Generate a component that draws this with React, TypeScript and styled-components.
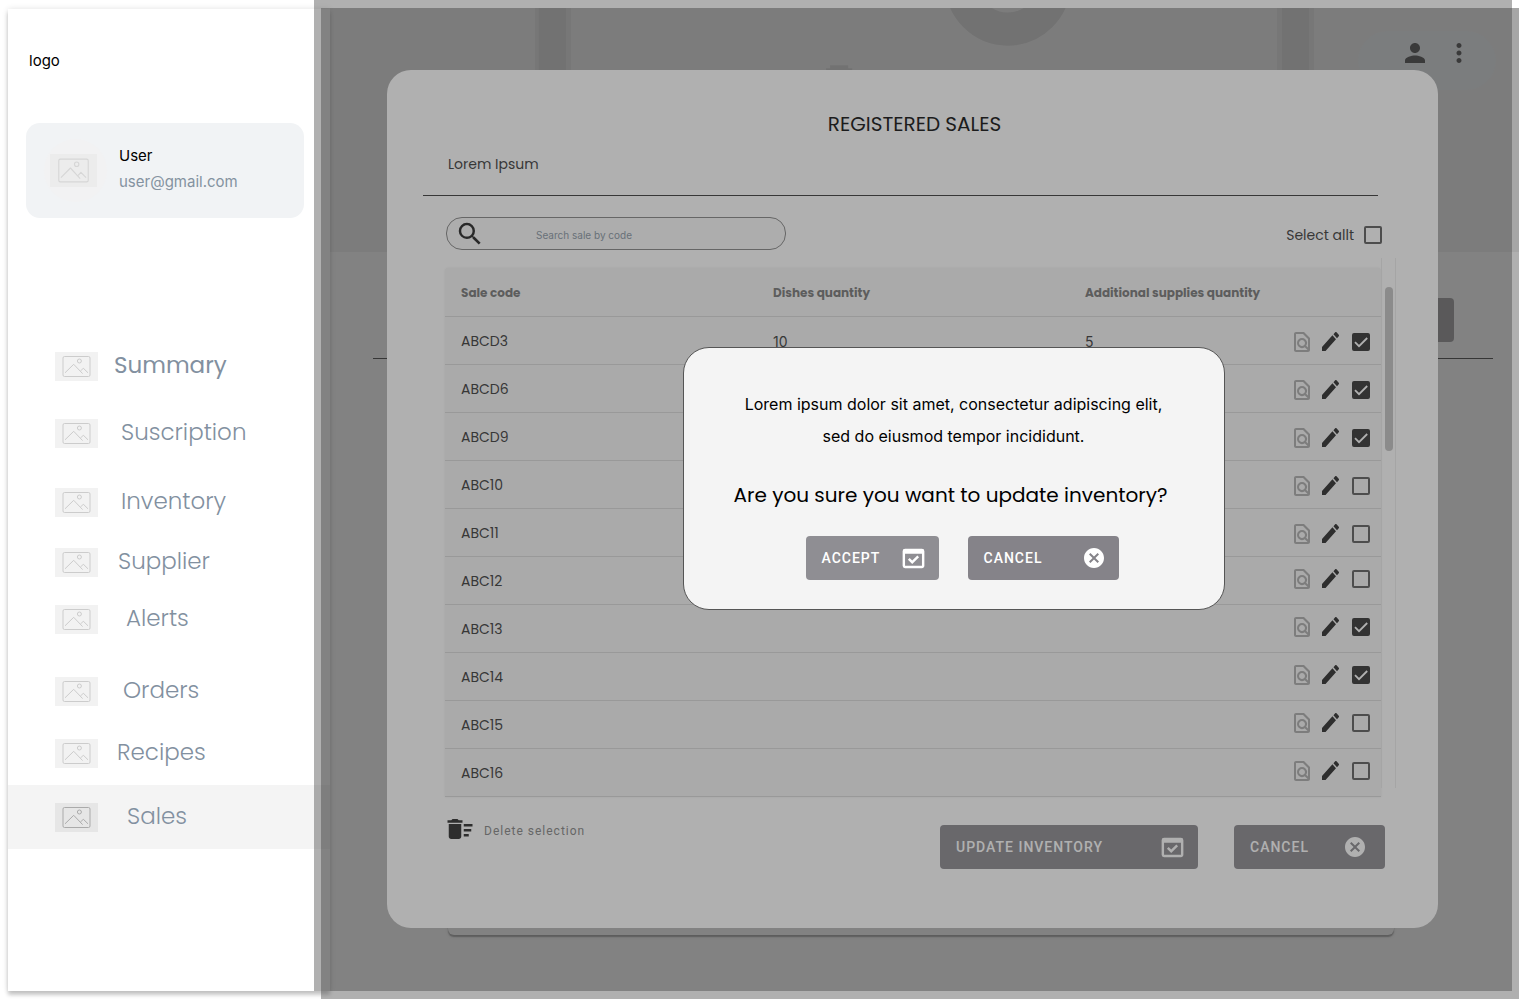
import React, { useState } from "react";
import styled, { createGlobalStyle } from "styled-components";
import {
  MdCancel,
  MdDeleteSweep,
  MdMoreVert,
  MdOutlineDomainVerification,
  MdOutlineFindInPage,
  MdPerson,
  MdSearch,
} from "react-icons/md";

const display = `Poppins, Inter, "Open Sans", sans-serif`;
const body = `Inter, "Open Sans", sans-serif`;
const label = `Roboto, Inter, sans-serif`;

const GlobalStyle = createGlobalStyle`
  *, *::before, *::after { box-sizing: border-box; }
  body { margin: 0; background: #fff; font-family: ${body}; color: #000; }
  button, input { font: inherit; }
`;

/* Every layer of the page shares one grid cell, so they stack in source order. */
const Page = styled.div`
  display: grid;
  grid-template-columns: minmax(0, 1fr);
  min-height: 100vh;
  & > * {
    grid-area: 1 / 1;
  }
`;

const Shell = styled.div`
  display: flex;
`;

const Sidebar = styled.aside`
  display: flex;
  flex-direction: column;
  flex: none;
  width: 322px;
  margin: 9px 0 12px 8px;
  background: #fff;
  box-shadow: 0 4px 4px rgba(0, 0, 0, 0.2), 0 0 6px rgba(0, 0, 0, 0.12);
  z-index: 1;
`;

const Logo = styled.div`
  padding: 42px 21px 0;
  font-size: 15px;
  line-height: 20px;
`;

const UserCard = styled.section`
  display: flex;
  align-items: center;
  gap: 12px;
  height: 95px;
  margin: 52px 26px 0 18px;
  padding: 0 18px;
  border-radius: 14px;
  background: #f1f3f5;
`;

const Avatar = styled.div`
  display: grid;
  place-items: center;
  width: 63px;
  height: 63px;
  padding-right: 4px;
  border-radius: 50%;
  background: #f2f2f3;
`;

const UserText = styled.div`
  font-size: 15px;
  line-height: 26px;
  padding-bottom: 3px;
`;

const Email = styled.div`
  color: #8492a0;
`;

const Nav = styled.nav`
  display: flex;
  flex-direction: column;
  padding-top: 126px;
`;

const NavLink = styled.a<{ $before?: number; $gap: number; $active?: boolean; $strong?: boolean }>`
  display: flex;
  align-items: center;
  gap: ${(p) => p.$gap}px;
  height: ${(p) => (p.$active ? 64 : 44)}px;
  margin-top: ${(p) => p.$before ?? 0}px;
  padding-left: 47px;
  background: ${(p) => (p.$active ? "#f4f4f4" : "transparent")};
  color: #8290a0;
  font-family: ${display};
  font-size: 23px;
  font-weight: ${(p) => (p.$strong ? 400 : 300)};
  line-height: 32px;
  text-decoration: none;
`;

const NavText = styled.span`
  padding-bottom: 2px;
`;

const Main = styled.main`
  flex: 1;
  min-width: 0;
  margin: 8px 1px 12px 0;
`;

const Banner = styled.div`
  display: flex;
  justify-content: flex-end;
  align-items: flex-start;
  height: 244px;
  background: #eeeeee;
`;

const BannerArt = styled.svg`
  flex: 1;
  min-width: 0;
  height: 244px;
  margin-right: -161px;
`;

const Account = styled.div`
  display: flex;
  align-items: center;
  justify-content: flex-end;
  gap: 14px;
  width: 138px;
  height: 59px;
  margin: 23px 23px 0 0;
  padding: 0 22px 16px;
  border-radius: 30px;
  background: #ebeff3;
  color: #2a2a2a;
`;

const IconButton = styled.button`
  display: grid;
  place-items: center;
  padding: 0;
  border: 0;
  background: none;
  color: inherit;
`;

const PageActions = styled.div`
  display: flex;
  justify-content: flex-end;
  margin: 46px 65px 16px 43px;
`;

const BackAction = styled.div`
  width: 151px;
  height: 44px;
  border-radius: 4px;
  background: #88868b;
`;

const PageRule = styled.hr`
  margin: 0 26px 0 43px;
  border: 0;
  border-top: 1px solid #202020;
`;

const BackTable = styled.div`
  height: 576px;
  margin: 0 125px 0 118px;
  border-radius: 0 0 6px 6px;
  box-shadow: 0 2px 1px rgba(0, 0, 0, 0.3), 0 2px 3px rgba(0, 0, 0, 0.2);
`;

const Dim = styled.div<{ $front?: boolean }>`
  margin: ${(p) => (p.$front ? "0 8px 12px 314px" : "8px 1px 4px 321px")};
  background: rgba(66, 66, 66, 0.42);
  z-index: 1;
`;

const Panel = styled.section`
  align-self: start;
  display: flex;
  flex-direction: column;
  margin: 70px 82px 75px 387px;
  padding: 40px 42px 59px 58px;
  border-radius: 24px;
  background: #fff;
  z-index: 1;
`;

const Title = styled.h1`
  margin: 0;
  padding-right: 12px;
  font-family: ${display};
  font-size: 20px;
  font-weight: 400;
  line-height: 28px;
  text-align: center;
`;

const Subtitle = styled.p`
  margin: 16px 3px 0;
  color: #303030;
  font-family: ${display};
  font-size: 14px;
  line-height: 20px;
`;

const Rule = styled.hr`
  margin: 21px 18px 0 -22px;
  border: 0;
  border-top: 1px solid #303030;
`;

const Toolbar = styled.div`
  display: flex;
  align-items: center;
  justify-content: space-between;
  margin: 21px 14px 8px 1px;
`;

const SearchBox = styled.label`
  display: flex;
  align-items: center;
  gap: 51px;
  width: 340px;
  height: 33px;
  padding: 0 8px;
  border: 1px solid #808080;
  border-radius: 16px;
  background: #fafafa;
  color: #181818;
`;

const SearchInput = styled.input`
  flex: 1;
  min-width: 0;
  padding: 2px 0 0;
  border: 0;
  outline: 0;
  background: none;
  font-family: ${body};
  font-size: 10px;
  &::placeholder {
    color: #8492a0;
    opacity: 1;
  }
`;

const SelectAll = styled.label`
  display: flex;
  align-items: center;
  gap: 10px;
  padding-top: 3px;
  color: #303030;
  font-family: ${display};
  font-size: 14px;
  line-height: 20px;
`;

const Scroller = styled.div`
  display: flex;
`;

const TableFrame = styled.div`
  flex: 1;
  min-width: 0;
  padding-top: 10px;
`;

const Table = styled.table`
  width: 100%;
  table-layout: fixed;
  border-collapse: separate;
  border-spacing: 0;
  background: #f5f5f5;
  border-radius: 4px 4px 0 0;
  box-shadow: 0 0 2px rgba(0, 0, 0, 0.1);
`;

const HeadCell = styled.th<{ $width?: string }>`
  width: ${(p) => p.$width ?? "auto"};
  height: 49px;
  padding: 2px 0 0 16px;
  border-bottom: 1px solid #d8d8d8;
  color: #707070;
  font-family: ${display};
  font-size: 12px;
  font-weight: 700;
  text-align: left;
  white-space: nowrap;
`;

const Cell = styled.td<{ $numeric?: boolean }>`
  height: 48px;
  padding: 2px 0 0 16px;
  border-bottom: 1px solid #d8d8d8;
  color: #303030;
  font-family: ${(p) => (p.$numeric ? body : display)};
  font-size: 14px;
`;

const ActionCell = styled.td`
  padding: 0;
  border-bottom: 1px solid #d8d8d8;
`;

const RowActions = styled.div<{ $raised: boolean }>`
  display: flex;
  align-items: center;
  justify-content: flex-end;
  gap: 8px;
  padding: ${(p) => (p.$raised ? "0 11px 4px 0" : "2px 11px 0 0")};
`;

const FindButton = styled(IconButton)`
  color: #a8a8a8;
`;

const EditButton = styled(IconButton)`
  margin-right: 5px;
  color: #202020;
`;

const CheckFrame = styled.span`
  position: relative;
  display: inline-flex;
`;

const CheckInput = styled.input`
  appearance: none;
  width: 18px;
  height: 18px;
  margin: 0;
  border: 2px solid #555;
  border-radius: 2px;
  &:checked {
    border-color: #282828;
    background: #282828;
  }
`;

const CheckMark = styled.svg`
  position: absolute;
  inset: 0;
  pointer-events: none;
`;

const ScrollTrack = styled.div`
  width: 15px;
  height: 530px;
  padding: 29px 3px 0;
  border: solid #ececec;
  border-width: 0 1px;
`;

const ScrollThumb = styled.div`
  width: 8px;
  height: 164px;
  border-radius: 4px;
  background: #c0c0c0;
`;

const Footer = styled.footer`
  display: flex;
  align-items: flex-start;
  justify-content: space-between;
  padding: 28px 11px 0 0;
`;

const DeleteButton = styled.button`
  display: flex;
  align-items: center;
  gap: 9px;
  height: 30px;
  margin-top: -11px;
  padding: 0;
  border: 0;
  background: none;
  color: #808080;
  font-family: ${label};
  font-size: 12px;
  font-weight: 400;
  letter-spacing: 1px;
  svg {
    color: #202020;
  }
`;

const DeleteText = styled.span`
  padding-top: 4px;
`;

const ButtonRow = styled.div<{ $gap: number }>`
  display: flex;
  gap: ${(p) => p.$gap}px;
`;

const ActionButton = styled.button<{ $width: number; $end: number; $tone?: string }>`
  display: flex;
  align-items: center;
  justify-content: space-between;
  width: ${(p) => p.$width}px;
  height: 44px;
  padding: 0 ${(p) => p.$end}px 0 16px;
  border: 0;
  border-radius: 4px;
  background: ${(p) => p.$tone ?? "#858389"};
  color: #fff;
  font-family: ${label};
  font-size: 14px;
  font-weight: 500;
  letter-spacing: 1px;
`;

const Dialog = styled.div`
  align-self: start;
  justify-self: center;
  display: flex;
  flex-direction: column;
  align-items: center;
  width: 542px;
  margin: 347px 0 0 387px;
  padding: 40px 40px 29px;
  border: 1px solid #555;
  border-radius: 26px;
  background: #f4f4f4;
  z-index: 2;
`;

const DialogText = styled.p`
  margin: 0;
  font-size: 16px;
  line-height: 32px;
  text-align: center;
`;

const DialogQuestion = styled.h2`
  margin: 27px 0 25px;
  padding-right: 6px;
  font-family: ${display};
  font-size: 20px;
  font-weight: 400;
  line-height: 32px;
  white-space: nowrap;
`;

const DialogButtons = styled(ButtonRow)`
  padding-left: 17px;
`;

function Placeholder({ w, h, fill, stroke }: { w: number; h: number; fill: string; stroke: string }) {
  return (
    <svg width={w} height={h} viewBox="0 0 43 29" preserveAspectRatio="none" aria-hidden="true">
      <rect width="43" height="29" fill={fill} />
      <g fill="none" stroke={stroke} strokeWidth="1" strokeLinejoin="round">
        <rect x="8" y="4.5" width="27" height="20" rx="1.5" />
        <circle cx="24.4" cy="9" r="2" />
        <path d="M10 20.8 18.7 12.3 27.6 21.6M25.8 18.8 28.3 16.2 33 20.8" />
      </g>
    </svg>
  );
}

function Pencil() {
  return (
    <svg width="17" height="19" viewBox="3 3 18 18" preserveAspectRatio="none" aria-hidden="true">
      <path
        fill="currentColor"
        d="M3 17.25V21h3.75L17.81 9.94l-3.75-3.75L3 17.25zM20.71 7.04a1 1 0 0 0 0-1.41l-2.34-2.34a1 1 0 0 0-1.41 0l-1.83 1.83 3.75 3.75 1.83-1.83z"
      />
    </svg>
  );
}

function Check({ id, title, initial = false }: { id: string; title?: string; initial?: boolean }) {
  const [on, setOn] = useState(initial);
  return (
    <CheckFrame>
      <CheckInput
        id={id}
        type="checkbox"
        aria-label={title}
        checked={on}
        onChange={(e) => setOn(e.target.checked)}
      />
      {on && (
        <CheckMark width="18" height="18" viewBox="0 0 18 18" aria-hidden="true">
          <path d="M3 9.2 7 13.2 15.2 5" fill="none" stroke="#fff" strokeWidth="1.8" />
        </CheckMark>
      )}
    </CheckFrame>
  );
}

const links = [
  { text: "Summary", gap: 16, strong: true },
  { text: "Suscription", gap: 23, before: 23 },
  { text: "Inventory", gap: 23, before: 25 },
  { text: "Supplier", gap: 20, before: 16 },
  { text: "Alerts", gap: 28, before: 13 },
  { text: "Orders", gap: 25, before: 28 },
  { text: "Recipes", gap: 19, before: 18 },
  { text: "Sales", gap: 29, before: 10, active: true },
];

type Sale = { code: string; dishes?: string; supplies?: string; picked?: boolean };

const firstSales: Sale[] = [
  { code: "ABCD3", dishes: "10", supplies: "5", picked: true },
  { code: "ABCD6", picked: true },
  { code: "ABCD9", picked: true },
  { code: "ABC10" },
  { code: "ABC11" },
];

const moreSales: Sale[] = [
  { code: "ABC12" },
  { code: "ABC13", picked: true },
  { code: "ABC14", picked: true },
  { code: "ABC15" },
  { code: "ABC16" },
];

function SaleRows({ sales, raised }: { sales: Sale[]; raised: boolean }) {
  return (
    <tbody>
      {sales.map((s) => (
        <tr key={s.code}>
          <Cell>{s.code}</Cell>
          <Cell $numeric>{s.dishes}</Cell>
          <Cell $numeric>{s.supplies}</Cell>
          <ActionCell>
            <RowActions $raised={raised}>
              <FindButton aria-label={`View ${s.code}`}>
                <MdOutlineFindInPage size={24} />
              </FindButton>
              <EditButton aria-label={`Edit ${s.code}`}>
                <Pencil />
              </EditButton>
              <Check id={`pick-${s.code}`} title={`Select ${s.code}`} initial={s.picked} />
            </RowActions>
          </ActionCell>
        </tr>
      ))}
    </tbody>
  );
}

export default function App() {
  return (
    <>
      <GlobalStyle />
      <Page>
        <Shell>
          <Sidebar>
            <Logo>logo</Logo>
            <UserCard>
              <Avatar>
                <Placeholder w={47} h={33} fill="#ececec" stroke="#d6d6d6" />
              </Avatar>
              <UserText>
                User
                <Email>user@gmail.com</Email>
              </UserText>
            </UserCard>
            <Nav>
              {links.map((l) => (
                <NavLink
                  key={l.text}
                  href={`#${l.text.toLowerCase()}`}
                  $gap={l.gap}
                  $before={l.before}
                  $active={l.active}
                  $strong={l.strong}
                >
                  <Placeholder
                    w={43}
                    h={29}
                    fill={l.active ? "#e6e6e6" : "#f2f2f2"}
                    stroke={l.active ? "#aaaaaa" : "#cccccc"}
                  />
                  <NavText>{l.text}</NavText>
                </NavLink>
              ))}
            </Nav>
          </Sidebar>
          <Main>
            <Banner>
              <BannerArt viewBox="0 0 1188 243" preserveAspectRatio="xMidYMin slice" aria-hidden="true">
                <g fill="#dfdfdf">
                  <rect x="206" width="36" height="243" />
                  <rect x="945" width="37" height="243" />
                </g>
                <g fill="#d0d0d0">
                  <rect x="210" width="27" height="243" />
                  <rect x="950" width="27" height="243" />
                  <path d="M496 62V60H500V57H518V60H522V243H496Z" />
                </g>
                <circle cx="677" cy="-25" r="46" fill="none" stroke="#d0d0d0" strokeWidth="33" />
              </BannerArt>
              <Account>
                <IconButton aria-label="Account">
                  <MdPerson size={30} />
                </IconButton>
                <IconButton aria-label="More">
                  <MdMoreVert size={30} />
                </IconButton>
              </Account>
            </Banner>
            <PageActions>
              <BackAction />
            </PageActions>
            <PageRule />
            <BackTable />
          </Main>
        </Shell>

        <Dim />

        <Panel>
          <Title>REGISTERED SALES</Title>
          <Subtitle>Lorem Ipsum</Subtitle>
          <Rule />
          <Toolbar>
            <SearchBox htmlFor="sale-search">
              <MdSearch size={30} aria-hidden="true" />
              <SearchInput id="sale-search" type="text" placeholder="Search sale by code" />
            </SearchBox>
            <SelectAll htmlFor="select-all">
              Select allt
              <Check id="select-all" />
            </SelectAll>
          </Toolbar>
          <Scroller>
            <TableFrame>
              <Table>
                <thead>
                  <tr>
                    <HeadCell $width="33.33%">Sale code</HeadCell>
                    <HeadCell $width="33.33%">Dishes quantity</HeadCell>
                    <HeadCell>Additional supplies quantity</HeadCell>
                    <HeadCell $width="108px" aria-label="Actions" />
                  </tr>
                </thead>
                <SaleRows sales={firstSales} raised={false} />
                <SaleRows sales={moreSales} raised />
              </Table>
            </TableFrame>
            <ScrollTrack>
              <ScrollThumb />
            </ScrollTrack>
          </Scroller>
          <Footer>
            <DeleteButton>
              <MdDeleteSweep size={30} />
              <DeleteText>Delete selection</DeleteText>
            </DeleteButton>
            <ButtonRow $gap={36}>
              <ActionButton $width={258} $end={11}>
                UPDATE INVENTORY
                <MdOutlineDomainVerification size={29} />
              </ActionButton>
              <ActionButton $width={151} $end={18}>
                CANCEL
                <MdCancel size={24} />
              </ActionButton>
            </ButtonRow>
          </Footer>
        </Panel>

        <Dim $front />

        <Dialog role="dialog" aria-label="Update inventory">
          <DialogText>
            Lorem ipsum dolor sit amet, consectetur adipiscing elit,
            <br />
            sed do eiusmod tempor incididunt.
          </DialogText>
          <DialogQuestion>Are you sure you want to update inventory?</DialogQuestion>
          <DialogButtons $gap={29}>
            <ActionButton $width={133} $end={11} $tone="#8f8e93">
              ACCEPT
              <MdOutlineDomainVerification size={29} />
            </ActionButton>
            <ActionButton $width={151} $end={13}>
              CANCEL
              <MdCancel size={24} />
            </ActionButton>
          </DialogButtons>
        </Dialog>
      </Page>
    </>
  );
}
